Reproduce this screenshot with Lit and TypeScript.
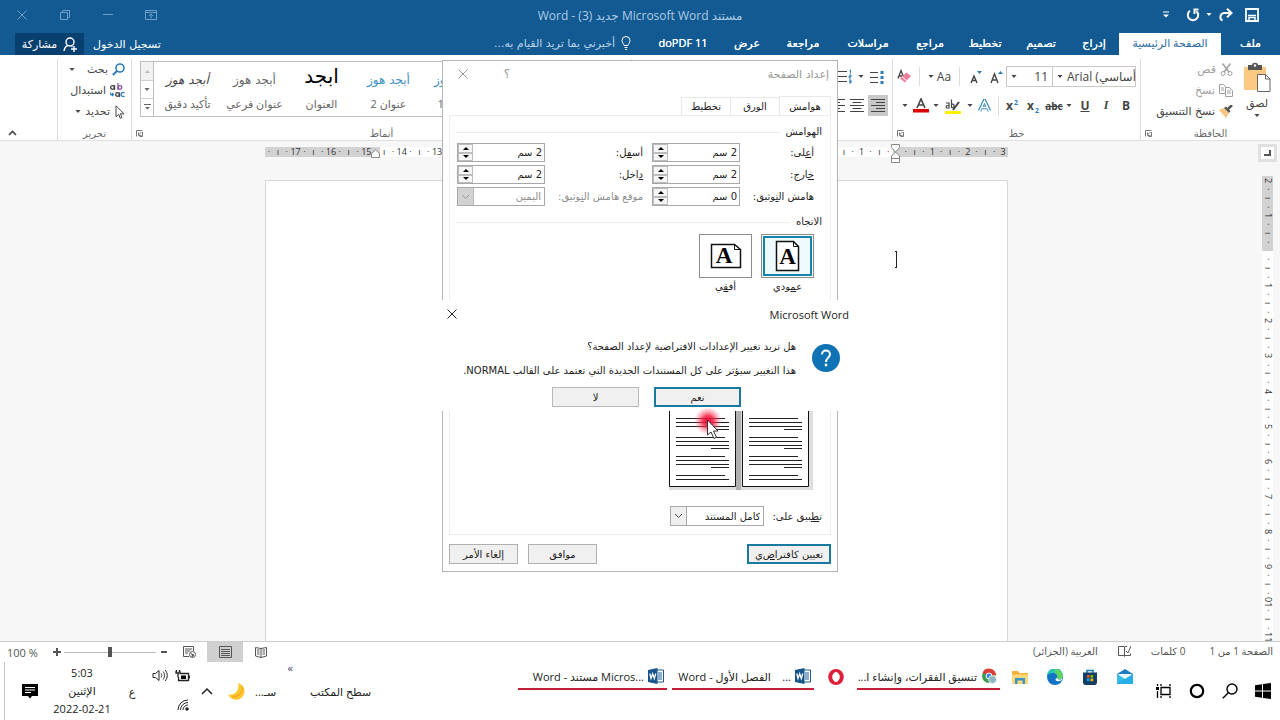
import { LitElement, html, svg, css, nothing } from "lit";
import { customElement, property } from "lit/decorators.js";
import { classMap } from "lit/directives/class-map.js";

const base = css`
  * { box-sizing: border-box; }
  button, input, select {
    font: inherit; color: inherit; margin: 0; padding: 0; border: 0;
    background: none; border-radius: 0; min-width: 0; outline: 0;
  }
  button { display: flex; align-items: center; justify-content: center; white-space: nowrap; }
  select { appearance: none; }
  svg { display: block; flex: none; }
  u { text-underline-offset: 1px; }
`;

const icon = (w: number, h: number, body: unknown) =>
  html`<svg width=${w} height=${h} viewBox="0 0 ${w} ${h}" fill="none" stroke="currentColor" aria-hidden="true">${body}</svg>`;

const caret = () => icon(6, 4, svg`<path d="M.5 0h5L3 3z" fill="currentColor" stroke="none"/>`);
const cross = (s: number) => icon(s, s, svg`<path d="M.5.5 ${s - 0.5} ${s - 0.5}M${s - 0.5}.5.5 ${s - 0.5}"/>`);
const launcher = () => icon(7, 7, svg`<path d="M6.500.500h-6v6M5.500 2 2.500 5M2.500 2.500v3h3M6.500 2v4.500H3.500"/>`);

const wordIcon = () => icon(16, 16, svg`
  <path d="M8 2h7.500v12H8z" fill="#fff" stroke="#1b5a92"/>
  <path d="M10 5h4M10 7h4M10 9h4M10 11h4" stroke="#1b5a92"/>
  <path d="M0 2 9.500 0v16L0 14z" fill="#16548c" stroke="none"/>
  <path d="M1.800 5.500 3 10.500 4.700 5.800 6.300 10.500 7.800 5.500" stroke="#fff" stroke-width="1.300"/>`);

/* ------------------------------------------------------------ title bar */
@customElement("title-bar")
export class TitleBar extends LitElement {
  static styles = [base, css`
    :host { display: grid; grid-template-columns: 1fr auto 1fr; height: 31px; background: #135a93; color: #fff; }
    .quick { display: flex; align-items: center; padding-inline-start: 18px; height: 29px; }
    .tool { width: 20px; height: 24px; }
    .thin { width: 12px; }
    .apart { margin-inline-start: 7px; }
    .title { color: #aecbe4; font-size: 12px; line-height: 32px; white-space: nowrap; }
    .system { display: flex; justify-content: flex-end; height: 29px; color: #6d9fca; }
    .system button { width: 43px; }
  `];
  render() {
    return html`
      <div class="quick">
        <button class="tool" aria-label="حفظ">${icon(14, 14, svg`<path d="M1 1h12v12H1z" stroke-width="1.800"/><path d="M3 7.500h8" stroke-width="1.500"/><path d="M4 13v-3.500h6V13" stroke-width="1.500"/>`)}</button>
        <button class="tool apart" aria-label="إعادة">${icon(15, 14, svg`<path d="M13 5H6a4 4 0 0 0-1.500 7.500" stroke-width="2"/><path d="M9 .800 13.500 5 9 9.200" stroke-width="2"/>`)}</button>
        <button class="tool thin" aria-label="خيارات الإعادة">${caret()}</button>
        <button class="tool" aria-label="تراجع">${icon(14, 14, svg`<path d="M4 2.800a5.200 5.200 0 1 0 6.500.400" stroke-width="2"/><path d="M12.500 1.500H8.500V6" stroke-width="2"/>`)}</button>
        <button class="tool apart" aria-label="تخصيص">${icon(6, 7, svg`<path d="M0 1h6" /><path d="M0 3.500h6L3 6.500z" fill="currentColor" stroke="none"/>`)}</button>
      </div>
      <div class="title">مستند Microsoft Word جديد (3) - Word</div>
      <div class="system">
        <button aria-label="عرض الشريط">${icon(12, 10, svg`<path d="M.5.5h11v9H.5zM.5 2.500h11M6 8.500V4M4 6l2-2 2 2"/>`)}</button>
        <button aria-label="تصغير">${icon(10, 2, svg`<path d="M0 .5h10"/>`)}</button>
        <button aria-label="استعادة">${icon(10, 10, svg`<path d="M.5 2.500h7v7h-7zM2.500 2.500v-2h7v7h-2"/>`)}</button>
        <button aria-label="إغلاق">${cross(10)}</button>
      </div>`;
  }
}

/* ------------------------------------------------------------ ribbon tabs */
@customElement("ribbon-tabs")
export class RibbonTabs extends LitElement {
  static styles = [base, css`
    :host { display: flex; height: 24px; background: #135a93; color: #fff; font-size: 11px; }
    .tabs { display: grid; grid-template-columns: 59px 102px 50px 56px 56px 54px 70px 60px 52px 76px; padding-top: 2px; }
    .tab { text-shadow: 0 0 0 #fff; padding-bottom: 3px; }
    .on { background: #fff; color: #2b6ca3; text-shadow: none; }
    .ask { color: #bcd5ea; gap: 6px; padding-inline-start: 14px; }
    .ask svg { color: #fff; }
    .account { display: flex; margin-inline-start: auto; padding-inline-end: 15px; padding-top: 2px; }
    .sign { padding-inline: 9px; }
    .share { background: #073f6f; width: 69px; gap: 6px; }
    .ask, .account { font-family: "DejaVu Sans", sans-serif; }
  `];
  render() {
    const names = ["ملف", "الصفحة الرئيسية", "إدراج", "تصميم", "تخطيط", "مراجع", "مراسلات", "مراجعة", "عرض", "doPDF 11"];
    return html`
      <div class="tabs" role="tablist">
        ${names.map((n, i) => html`<button role="tab" class=${classMap({ tab: true, on: i === 1 })}>${n}</button>`)}
      </div>
      <button class="ask">${icon(10, 14, svg`<path d="M3 9.500C3 8 1 7 1 4.500a4 4 0 0 1 8 0C9 7 7 8 7 9.500zM3.500 11.500h3M4 13.500h2"/>`)}أخبرني بما تريد القيام به...</button>
      <div class="account">
        <button class="sign">تسجيل الدخول</button>
        <button class="share">${icon(14, 15, svg`<circle cx="7" cy="5" r="4" stroke-width="1.400"/><path d="M1 14c.500-3 2-5 4-5.500M8.500 9.500h1M11 9v6M8 12h6" stroke-width="1.400"/>`)}مشاركة</button>
      </div>`;
  }
}

/* ------------------------------------------------------------ ribbon */
@customElement("ribbon-group")
export class RibbonGroup extends LitElement {
  @property() name = "";
  @property({ type: Boolean }) opener = false;
  static styles = [base, css`
    :host { display: flex; flex-direction: column; border-inline-end: 1px solid #dcdcdc; margin-top: 4px; min-height: 0; }
    .body { flex: 1; min-height: 0; }
    .foot { display: grid; grid-template-columns: 14px 1fr 14px; align-items: center; height: 14px; color: #6a6a6a; font-size: 10px; flex: none; }
    .label { text-align: center; }
    button { grid-column: 3; color: #777; }
  `];
  render() {
    return html`<div class="body"><slot></slot></div>
      <div class="foot"><span></span><span class="label">${this.name}</span>
      ${this.opener ? html`<button aria-label="المزيد">${launcher()}</button>` : nothing}</div>`;
  }
}

const alignLines = (w: number[], start: number) =>
  icon(14, 13, svg`${w.map((n, i) => svg`<path d="M${start === 0 ? 0 : start === 1 ? (14 - n) / 2 : 14 - n} ${i * 3 + 0.5}h${n}"/>`)}`);

@customElement("word-ribbon")
export class WordRibbon extends LitElement {
  static styles = [base, css`
    :host { display: flex; height: 86px; background: #fff; color: #444; font-size: 11px; border-bottom: 1px solid #e0e0e0; overflow: hidden; }
    .clipboard { width: 140px; }
    .font { width: 248px; }
    .paragraph { width: 261px; }
    .styles { flex: 1; }
    .editing { width: 74px; }
    .clip { display: flex; padding-right: 9px; gap: 10px; }
    .paste { flex-direction: column; gap: 4px; width: 28px; padding-top: 3px; justify-content: flex-start; line-height: 14px; }
    .list { display: flex; flex-direction: column; flex: 1; font-family: "DejaVu Sans", sans-serif; }
    .list button { justify-content: flex-start; height: 21px; gap: 4px; }
    .list .off { color: #a0a0a0; }
    .list .push { margin-inline-start: 8px; }
    .row { display: flex; align-items: center; height: 21px; }
    .rows { display: flex; flex-direction: column; gap: 8px; padding: 7px 4px 0 0; }
    .box { display: flex; border: 1px solid #c8c8c8; height: 21px; align-items: center; font-size: 12px; }
    .box + .box { border-inline-start: 0; }
    .name { width: 84px; }
    .size { width: 46px; }
    .box input { flex: 1; width: 10px; direction: ltr; height: 19px; }
    .box .dd { width: 14px; }
    .size input { text-align: right; padding-right: 4px; }
    .b { height: 21px; font-size: 12px; direction: ltr; }
    .w8 { width: 8px; } .w10 { width: 10px; } .w16 { width: 16px; } .w20 { width: 20px; } .w22 { width: 22px; } .w26 { width: 26px; }
    .bold { font-weight: 700; }
    .ital { font-style: italic; font-family: "Liberation Serif", serif; font-weight: 700; }
    .und { text-decoration: underline; font-weight: 700; }
    .strike { text-decoration: line-through; font-size: 10px; font-weight: 700; }
    .sep { width: 14px; height: 19px; background: linear-gradient(#dcdcdc, #dcdcdc) center / 1px 100% no-repeat; }
    .sep8 { width: 8px; }
    sub, sup { font-size: 7px; color: #2b7cb8; line-height: 0; margin-left: 1px; }
    .active { background: #c8c8c8; }
    .gallery { display: flex; justify-content: flex-end; border: 1px solid #c0c0c0; height: 56px; margin: 2px 8px 0; }
    .style { width: 67px; flex-direction: column; justify-content: flex-start; overflow: hidden; color: #666; flex: none; }
    .sample { height: 32px; line-height: 36px; font-size: 12px; font-family: "DejaVu Sans", sans-serif; }
    .blue { color: #3a8fc4; }
    .big { color: #000; font-size: 20px; line-height: 28px; }
    .slant { font-style: italic; color: #444; }
    .caption { line-height: 20px; }
    .scroll { display: grid; grid-template-rows: 1fr 1fr 1fr; width: 13px; border-inline-start: 1px solid #c0c0c0; color: #666; }
    .scroll button + button { border-top: 1px solid #d0d0d0; }
    .scroll .off { background: #f2f2f2; color: #bbb; }
    .edit { padding-right: 6px; }
    .fold { width: 57px; flex: none; align-items: flex-end; justify-content: flex-end; padding: 0 0 4px 8px; }
  `];
  render() {
    const dd = (cls: string) => html`<button class="b ${cls}" aria-label="خيارات">${caret()}</button>`;
    return html`
      <ribbon-group class="clipboard" name="الحافظة" opener>
        <div class="clip">
          <button class="paste">
            ${icon(28, 30, svg`<path d="M1 5h22v23H1z" fill="#fcc983" stroke="none"/><path d="M5 3h4c0-3 6-3 6 0h4v5H5z" fill="#555" stroke="none"/><circle cx="12" cy="3.500" r="1.200" fill="#fff" stroke="none"/><path d="M14.500 12.500h8l4.500 4.500v12.500H14.500z" fill="#fff" stroke="#666"/><path d="M22.500 12.500V17H27" stroke="#666"/>`)}
            لصق ${caret()}
          </button>
          <div class="list">
            <button class="off">${icon(13, 13, svg`<path d="M2.500.500 9 9M10.500.500 4 9" stroke-width="1.500"/><circle cx="3" cy="10.500" r="2"/><circle cx="10" cy="10.500" r="2"/>`)}قص</button>
            <button class="off">${icon(14, 13, svg`<path d="M.5.500h4l2 2v7h-6z"/><path d="M6.500 3.500h4l3 3v6h-7zM8 7h4M8 9h4M2 4h3M2 6h3"/>`)}نسخ</button>
            <button>${icon(14, 13, svg`<path d="M0 5 5 3l5 5-3 5z" fill="#fac582" stroke="none"/><path d="M5 3 7 1.500 11.500 6 10 8z" fill="#555" stroke="none"/><path d="M9 4 13 0" stroke="#555" stroke-width="2.500"/>`)}نسخ التنسيق</button>
          </div>
        </div>
      </ribbon-group>

      <ribbon-group class="font" name="خط" opener>
        <div class="rows">
          <div class="row">
            <div class="box name"><input aria-label="الخط" value="Arial (أساسي"><button class="dd" aria-label="الخطوط">${caret()}</button></div>
            <div class="box size"><input aria-label="حجم الخط" value="11"><button class="dd" aria-label="الأحجام">${caret()}</button></div>
            <button class="b w20" aria-label="تكبير">${icon(13, 14, svg`<path d="M1 13 4.500 4 8 13M2 10h5" stroke-width="1.400"/><path d="M8 4h5L10.500 1z" fill="#2b7cb8" stroke="none"/>`)}</button>
            <button class="b w20" aria-label="تصغير">${icon(12, 14, svg`<path d="M1 13 4 6 7 13M2 10.500h4" stroke-width="1.400"/><path d="M7 1h5L9.500 4z" fill="#2b7cb8" stroke="none"/>`)}</button>
            <span class="sep"></span>
            <button class="b w16">Aa</button>${dd("w10")}
            <span class="sep"></span>
            <button class="b w16" aria-label="مسح التنسيق">${icon(15, 15, svg`<path d="M1 9.500 4 1.500 6.500 8M2 7h3" stroke-width="1.300"/><path d="M9.500 3.500 14 7l-6 6.500L3 9.500z" fill="#ee7f9b" stroke="none"/><path d="M5 7.800 10 11.800" stroke="#fff"/>`)}</button>
          </div>
          <div class="row">
            <button class="b w20 bold">B</button><button class="b w20 ital">I</button><button class="b w22 und">U</button>${dd("w10")}
            <button class="b w20 strike">abc</button>
            <button class="b w22 bold"><span>x<sub>2</sub></span></button><button class="b w20 bold"><span>x<sup>2</sup></span></button>
            <span class="sep sep8"></span>
            <button class="b w20" aria-label="تأثيرات النص">${icon(13, 13, svg`<path d="M1.500 12 6.500 1.500 11.500 12M3.500 8.500h6" stroke="#3e8cc0" stroke-width="3.600"/><path d="M1.500 12.500 6.500 2 11.500 12.500M3.500 8.500h6" stroke="#fff" stroke-width="1.500"/>`)}</button>${dd("w8")}
            <button class="b w26" aria-label="تمييز">${icon(16, 16, svg`<path d="M0 13h16v3H0z" fill="#fff100" stroke="none"/><path d="M1 5h3v5H2a1.400 1.400 0 0 1 0-2.500h2M6.500 1.500v8c3 1 4-4 0-3.500" stroke-width="1.200"/><path d="M8 12l6-8" stroke-width="2"/>`)}</button>${dd("w8")}
            <button class="b w22" aria-label="لون الخط">${icon(16, 15, svg`<path d="M0 11h16v3.500H0z" fill="#d80000" stroke="none"/><path d="M4 10 8 1 12 10M5.500 7h5" stroke-width="1.600"/>`)}</button>${dd("w10")}
          </div>
        </div>
      </ribbon-group>

      <ribbon-group class="paragraph">
        <div class="rows">
          <div class="row">
            <button class="b w22" aria-label="تعداد نقطي">${icon(14, 14, svg`<path d="M0 2.500h8M0 7.500h8M0 12.500h8"/><path d="M10.500 1h3v3h-3zM10.500 6h3v3h-3zM10.500 11h3v3h-3z" fill="#2b7cb8" stroke="none"/>`)}</button>${dd("w10")}
            <button class="b w22" aria-label="تعداد رقمي">${icon(15, 15, svg`<path d="M0 2.500h9M0 7.500h9M0 12.500h9"/><path d="M11.500 1h1v3.500M11 6h2v1.500h-2V9h2M11 11h2v3h-2M11 12.500h2" stroke="#2b7cb8"/>`)}</button>
          </div>
          <div class="row">
            <button class="b w20 active" aria-label="محاذاة لليمين">${alignLines([14, 9, 14, 9, 14], 2)}</button>
            <button class="b w22" aria-label="توسيط">${alignLines([14, 9, 14, 9, 14], 1)}</button>
            <button class="b w16" aria-label="محاذاة لليسار">${alignLines([14, 9, 14, 9, 14], 0)}</button>
          </div>
        </div>
      </ribbon-group>

      <ribbon-group class="styles" name="أنماط" opener>
        <div class="gallery">
          <button class="style"><span class="sample blue">أبجد هوز</span><span class="caption">عنوان 1</span></button>
          <button class="style"><span class="sample blue">أبجد هوز</span><span class="caption">عنوان 2</span></button>
          <button class="style"><span class="sample big">ابجد</span><span class="caption">العنوان</span></button>
          <button class="style"><span class="sample">أبجد هوز</span><span class="caption">عنوان فرعي</span></button>
          <button class="style"><span class="sample slant">أبجد هوز</span><span class="caption">تأكيد دقيق</span></button>
          <div class="scroll">
            <button class="off" aria-label="أعلى">${icon(5, 3, svg`<path d="M0 3h5L2.500 0z" fill="currentColor" stroke="none"/>`)}</button>
            <button aria-label="أسفل">${caret()}</button>
            <button aria-label="المزيد">${icon(7, 7, svg`<path d="M0 .500h7"/><path d="M1 3h5L3.500 5.500z" fill="currentColor" stroke="none"/>`)}</button>
          </div>
        </div>
      </ribbon-group>

      <ribbon-group class="editing" name="تحرير">
        <div class="list edit">
          <button>${icon(13, 13, svg`<circle cx="8" cy="5" r="4" stroke="#2b7cb8" stroke-width="1.600"/><path d="M5 8 .800 12" stroke="#2b7cb8" stroke-width="2"/>`)}بحث<span class="push">${caret()}</span></button>
          <button>${icon(15, 15, svg`<g stroke-width="1.300"><circle cx="2.500" cy="4.500" r="1.800"/><path d="M4.500 2v5" /><path d="M8 0v7" stroke="#8a4ea8"/><circle cx="10" cy="4.500" r="1.800" stroke="#8a4ea8"/><path d="M0 9v2.500h3M2 10l1.500 1.500L2 13" stroke="#2b7cb8"/><circle cx="7.500" cy="11.500" r="1.800"/><path d="M9.500 9.500v4.500"/><path d="M14.500 10a2 2 0 1 0 0 3" stroke="#2b7cb8"/></g>`)}استبدال</button>
          <button>${icon(11, 14, svg`<path d="M2 .800v11l2.700-2.500 1.500 4 1.800-.800-1.600-3.700H10z"/>`)}تحديد<span>${caret()}</span></button>
        </div>
      </ribbon-group>
      <button class="fold" aria-label="طي الشريط">${icon(9, 6, svg`<path d="M1 5 4.500 1.500 8 5" stroke-width="1.600"/>`)}</button>`;
  }
}

/* ------------------------------------------------------------ workspace */
const TICKS = ["n", "·", "ı", "·"];
const ticks = (count: number, zero: number, reversed = false) =>
  Array.from({ length: count }, (_, i) => {
    if (i % 4) return TICKS[i % 4];
    const n = String(Math.abs(i - zero) / 4);
    return n === "0" ? "" : reversed ? [...n].reverse().join("") : n;
  });

@customElement("word-workspace")
export class WordWorkspace extends LitElement {
  static styles = [base, css`
    :host { display: grid; grid-template-columns: 25px 1fr 17px; background: #f7f7f7; overflow: hidden; min-height: 0; color: #333; font-size: 9px; }
    .side { display: flex; flex-direction: column; align-items: center; padding-top: 3px; min-height: 0; }
    .corner { width: 19px; height: 18px; border: 3px solid #e0e0e0; background: #fff; color: #555; margin-bottom: 14px; flex: none; }
    .vruler { flex: 1; min-height: 0; width: 11px; display: flex; writing-mode: vertical-rl; direction: ltr; background: #fff; overflow: hidden; }
    .cell { flex: 1 1 0; min-width: 0; min-height: 0; display: flex; align-items: center; justify-content: center; line-height: 10px; white-space: nowrap; }
    .margin { background: #d2d2d2; }
    .half { background: linear-gradient(#d2d2d2 50%, #fff 50%); }
    .area { display: grid; grid-template-columns: 743px; grid-template-rows: 39px 1fr; justify-content: center; min-height: 0; }
    .hruler { position: relative; display: flex; height: 10px; margin-top: 6px; background: #fff; }
    .mark { position: absolute; top: -3px; inset-inline-start: 107px; color: #888; }
    .end { top: 2px; inset-inline-start: 628px; }
    .page { background: #fff; border: 1px solid #d8d8d8; border-bottom: 0; padding: 70px 109px 0 0; }
    .beam { width: 3px; height: 17px; color: #222; }
  `];
  render() {
    return html`
      <div class="side">
        <button class="corner" aria-label="علامة جدولة">${icon(7, 6, svg`<path d="M6 0v5H0" stroke-width="2"/>`)}</button>
        <div class="vruler">${ticks(53, 8, true).map((t, i) => html`<span class=${classMap({ cell: true, margin: i < 8, half: i === 8 })}>${t}</span>`)}</div>
      </div>
      <div class="area">
        <div class="hruler">
          ${ticks(84, 12).map((t, i) => html`<span class=${classMap({ cell: true, margin: i < 13 || i > 70 })}>${t}</span>`)}
          <span class="mark">${icon(11, 20, svg`<path d="M1.500.500h8v3L5.500 8l4 4v2.500h-8V12l4-4-4-4.500zM1.500 14.500h8v4h-8z" fill="#fff"/>`)}</span>
          <span class="mark end">${icon(9, 10, svg`<path d="M.5 4.500 4.500.800l4 3.700v4h-8z" fill="#fff"/>`)}</span>
        </div>
        <div class="page"><div class="beam">${icon(3, 17, svg`<path d="M0 .500h2M1.500 0v16M0 16.500h2"/>`)}</div></div>
      </div>
      <span></span>`;
  }
}

/* ------------------------------------------------------------ status bar */
@customElement("status-bar")
export class StatusBar extends LitElement {
  static styles = [base, css`
    :host { display: flex; align-items: center; height: 21px; border-top: 1px solid #cbcfcb; background: #fff; color: #555; font-size: 10px; padding: 0 7px; }
    .info { display: flex; align-items: center; gap: 24px; line-height: 18px; padding-bottom: 2px; }
    .proof { margin-inline: -4px; }
    .views { display: flex; align-items: center; height: 20px; margin-inline-start: auto; }
    .view { width: 36px; height: 20px; }
    .on { background: #d0d0d0; }
    .zoom { width: 15px; height: 20px; }
    .level { direction: ltr; font-size: 11px; width: 42px; text-align: left; }
    .slider { appearance: none; width: 92px; height: 20px; direction: ltr; background: linear-gradient(#bbb, #bbb) center / 100% 1px no-repeat; }
    .slider::-webkit-slider-thumb { appearance: none; width: 4px; height: 10px; background: #555; }
  `];
  render() {
    return html`
      <div class="info"><span>الصفحة 1 من 1</span><span>0 كلمات</span>
        <button class="proof" aria-label="تدقيق">${icon(13, 12, svg`<path d="M6 1.500H.500v9H6l.500 1 .500-1h5.500v-2M6.500 2v9M6.500 1.500H9M8 6l2 2 3-7" />`)}</button>
        <span>العربية (الجزائر)</span></div>
      <div class="views">
        <button class="view" aria-label="قراءة">${icon(12, 12, svg`<path d="M.500 1.500 6 2.500l5.500-1v8.500L6 11.500.500 10zM6 2v9.500M2 4h2.500M2 6h2.500M2 8h2.500M7.500 4H10M7.500 6H10M7.500 8H10"/>`)}</button>
        <button class="view on" aria-label="تخطيط الطباعة">${icon(13, 12, svg`<path d="M.500.500h12v11H.500zM2 3.500h9M2 5.500h9M2 7.500h9M2 9.500h9"/>`)}</button>
        <button class="view" aria-label="تخطيط ويب">${icon(13, 12, svg`<path d="M6 10.500H.500V.500h10V5M2 3h7M2 5h5M2 7h3"/><circle cx="9.500" cy="8.500" r="3"/><path d="M8 7.500l3 2M9 11l1-3" stroke-width="1.300"/>`)}</button>
        <button class="zoom" aria-label="تصغير">${icon(6, 2, svg`<path d="M0 1h6" stroke-width="2"/>`)}</button>
        <input class="slider" type="range" min="0" max="100" value="50" aria-label="تكبير/تصغير">
        <button class="zoom" aria-label="تكبير">${icon(8, 8, svg`<path d="M0 4h8M4 0v8" stroke-width="2"/>`)}</button>
        <span class="level">100 %</span>
      </div>`;
  }
}

/* ------------------------------------------------------------ taskbar */
@customElement("task-bar")
export class TaskBar extends LitElement {
  static styles = [base, css`
    :host { display: flex; height: 58px; background: #fff; color: #222; font-size: 11px; }
    .start { display: flex; color: #000; padding-inline-start: 1px; }
    .start button { width: 33px; }
    .band { display: flex; height: 29px; margin-inline-start: 5px; }
    .pin { width: 35px; }
    .task { display: flex; align-items: center; justify-content: flex-start; gap: 4px; border-bottom: 2px solid #c3203a; height: 28px; padding: 2px 3px 0; }
    .chrome { width: 143px; margin-inline-start: 2px; }
    .wordb { width: 142px; margin-inline-start: 4px; }
    .wordm { width: 149px; margin-inline-start: 5px; }
    .cap { direction: ltr; white-space: pre; }
    .opera { margin-inline-start: 4px; }
    .desk { display: flex; align-items: center; margin-inline-start: auto; }
    .more { align-self: flex-start; width: 10px; margin-inline: 9px 15px; color: #446; line-height: 12px; direction: ltr; text-align: center; }
    .weather { gap: 10px; padding-inline-end: 8px; }
    .up { width: 26px; }
    .tray { display: grid; grid-template-columns: 23px 23px; grid-template-rows: 29px 29px; }
    .tray button { height: 27px; }
    .lang { width: 32px; }
    .clock { display: grid; grid-template-rows: 18px 18px 18px; width: 68px; text-align: center; line-height: 18px; }
    .note { width: 36px; }
    .edgeline { border-inline-end: 1px solid #c8c8c8; width: 8px; margin-inline-end: 4px; }
  `];
  render() {
    return html`
      <div class="start">
        <button aria-label="ابدأ">${icon(16, 16, svg`<g fill="#000" stroke="none"><path d="M0 2.300 7 1.300v6.200H0zM8 1.100 16 0v7.500H8zM0 8.500h7v6.200l-7-1zM8 8.500h8V16l-8-1.100z"/></g>`)}</button>
        <button aria-label="بحث">${icon(16, 16, svg`<circle cx="10" cy="6" r="5" stroke-width="1.400"/><path d="M6.300 9.700.800 15.200" stroke-width="1.400"/>`)}</button>
        <button aria-label="كورتانا">${icon(16, 16, svg`<circle cx="8" cy="8" r="6.200" stroke-width="2.200"/>`)}</button>
        <button aria-label="عرض المهام">${icon(16, 16, svg`<path d="M5 4.500h9v7H5z" stroke-width="1.300"/><path d="M5 1v2M14 1v2M5 13v2M14 13v2M1.500 1v2M1.500 8v7" stroke-width="1.300"/><path d="M0 4h3v3H0z" fill="#000" stroke="none"/>`)}</button>
      </div>
      <div class="band">
        <button class="pin" aria-label="البريد">${icon(16, 15, svg`<path d="M0 5 8 0l8 5v10H0z" fill="#1d7cc1" stroke="none"/><path d="M1.500 5h13v5h-13z" fill="#eaf7fd" stroke="none"/><path d="M0 5l8 5-8 5z" fill="#35bdea" stroke="none"/><path d="M16 5v10H0z" fill="#24b0e6" stroke="none"/>`)}</button>
        <button class="pin" aria-label="المتجر">${icon(16, 16, svg`<path d="M5 4V1.500h6V4" stroke="#1677b8" stroke-width="1.500"/><path d="M1 3.500h14V14l-1.500 2h-11L1 14z" fill="#123f63" stroke="none"/><path d="M5 6h2.700v2.700H5z" fill="#f25022" stroke="none"/><path d="M8.500 6h2.700v2.700H8.500z" fill="#7fba00" stroke="none"/><path d="M5 9.500h2.700v2.700H5z" fill="#00a4ef" stroke="none"/><path d="M8.500 9.500h2.700v2.700H8.500z" fill="#ffb900" stroke="none"/>`)}</button>
        <button class="pin" aria-label="إيدج">${icon(16, 16, svg`<circle cx="8" cy="8" r="8" fill="#1173c6" stroke="none"/><path d="M0 7a8 8 0 0 1 16 0c0 4-5 4-6 2 1-3-1-5-4-5C3 4 1 5 0 7z" fill="#2bc3b4" stroke="none"/><path d="M8 .100A8 8 0 0 1 16 7c0 4-5 4-6 2 1-2 0-4-2-4.800z" fill="#63d35f" stroke="none"/><path d="M10 9c1 2 4 2 5.500.500C15 12 12 12.500 10 12 8 11.500 8 9.500 10 9z" fill="#fff" stroke="none"/>`)}</button>
        <button class="pin" aria-label="المستكشف">${icon(16, 14, svg`<path d="M0 1h6l1.500 2H16v11H0z" fill="#f2b23c" stroke="none"/><path d="M0 4.500h16V14H0z" fill="#fbd87b" stroke="none"/><path d="M3 14V8h10v6h-2.500v-3.500h-5V14z" fill="#3f94c4" stroke="none"/>`)}</button>
        <button class="task chrome">${icon(16, 16, svg`<circle cx="8" cy="8" r="7" fill="#3a9c51" stroke="none"/><path d="M1.500 5A7 7 0 0 1 15 7.500H8z" fill="#dc3d35" stroke="none"/><path d="M15 7a7 7 0 0 1-6 8l-1-6z" fill="#f6c52d" stroke="none"/><circle cx="8" cy="8" r="3" fill="#4285f4" stroke="#fff"/><circle cx="11.500" cy="11.500" r="4" fill="#8fb5c4" stroke="#fff" stroke-width=".7"/>`)}<span>تنسيق الفقرات، وإنشاء ا...</span></button>
        <button class="pin opera" aria-label="أوبرا">${icon(16, 16, svg`<ellipse cx="8" cy="8" rx="5.800" ry="6" stroke="#e0203a" stroke-width="4"/><ellipse cx="8" cy="8" rx="2.800" ry="5" fill="#fff" stroke="none"/>`)}</button>
        <button class="task wordb">${wordIcon()}<span class="cap">Word - الفصل الأول    ...</span></button>
        <button class="task wordm">${wordIcon()}<span class="cap">Word - مستند Micros...</span></button>
      </div>
      <div class="desk">
        <span>سطح المكتب</span>
        <button class="more" aria-label="المزيد">«</button>
        <button class="weather">سـ...${icon(17, 17, svg`<path d="M10 0a8.500 8.500 0 1 1-9.800 11.500C6 13 12 8 10 0z" fill="#fcc934" stroke="none"/><path d="M14 3c2 6-3 11-10 11" stroke="#f6a51c" stroke-width="1.200"/>`)}</button>
        <button class="up" aria-label="إظهار الرموز">${icon(12, 8, svg`<path d="M1 7 6 2l5 5" stroke-width="1.500"/>`)}</button>
        <div class="tray">
          <button aria-label="البطارية">${icon(15, 12, svg`<path d="M5 3.500h8.500v7H3.500V7M14.500 5.500v3M1 1v2h4V1M3 3v4M1.500 0v2M4.500 0v2" stroke-width="1.300"/><path d="M6 5.500h5v3.500H6z" fill="#000" stroke="none"/>`)}</button>
          <button aria-label="الصوت">${icon(16, 13, svg`<path d="M1 4.500h2.500l3.500-3v10l-3.500-3H1zM9 4.500c1 1 1 3 0 4M11 2.500c2 2 2 6 0 8M13 1c3 3 3 8 0 11"/>`)}</button>
          <button aria-label="الشبكة">${icon(12, 12, svg`<circle cx="10" cy="10" r="1.800" fill="#222" stroke="none"/><path d="M6 11a5 5 0 0 1 5-5M3.500 11A7.500 7.500 0 0 1 11 3.500M1 11A10 10 0 0 1 11 1"/>`)}</button>
        </div>
        <button class="lang">ع</button>
        <div class="clock"><span>5:03</span><span>الإثنين</span><span>2022-02-21</span></div>
        <button class="note" aria-label="الإشعارات">${icon(16, 15, svg`<path d="M0 0h16v12h-6l-2 2.500L6 12H0z" fill="#000" stroke="none"/><path d="M3 3.500h10M3 6h10M3 8.500h6" stroke="#fff"/>`)}</button>
      </div>
      <span class="edgeline"></span>`;
  }
}

/* ------------------------------------------------------------ page setup dialog */
const spinArrow = (up: boolean) =>
  icon(6, 3, up ? svg`<path d="M0 3h6L3 0z" fill="#000" stroke="none"/>` : svg`<path d="M0 0h6L3 3z" fill="#000" stroke="none"/>`);

@customElement("page-setup")
export class PageSetup extends LitElement {
  static styles = [base, css`
    :host { display: flex; flex-direction: column; border: 1px solid #b4b4b4; background: #fff; color: #222; font-size: 10px; padding: 0 6px 7px; font-family: "DejaVu Sans", sans-serif; }
    .head { display: flex; align-items: center; height: 26px; color: #999; padding: 0 2px 0 9px; font-size: 11px; }
    .head .q { margin-inline-start: auto; width: 16px; margin-inline-end: 31px; font-size: 12px; }
    .tabs { display: flex; align-items: flex-end; margin-top: 9px; }
    .tab { width: 49px; height: 18px; border: 1px solid #e8e8e8; border-bottom: 0; border-inline-start: 0; }
    .tab.on { width: 52px; height: 19px; border-inline-start: 1px solid #e8e8e8; }
    .panel { border: 1px solid #ececec; padding: 8px 8px 8px 6px; display: flex; flex-direction: column; height: 420px; }
    .legend { display: flex; align-items: center; gap: 6px; line-height: 16px; }
    .legend::after { content: ""; flex: 1; border-top: 1px solid #ececec; }
    .fields { display: grid; grid-template-columns: 74px 88px 107px 88px; row-gap: 3px; align-items: center; padding-inline-start: 8px; margin: 3px 0 8px; }
    label { white-space: nowrap; }
    .second { padding-inline-start: 9px; }
    .spin, .pick { display: flex; height: 19px; border: 1px solid #a8a8a8; align-items: stretch; background: #fff; }
    .spin input { flex: 1; width: 20px; padding-right: 2px; }
    .arrows { display: grid; grid-template-rows: 1fr 1fr; width: 15px; }
    .arrows button { border: 1px solid #bdbdbd; background: #f6f6f6; }
    .pick { position: relative; }
    .pick select { flex: 1; padding: 0 3px; text-align: right; opacity: 1; }
    .arrow { position: absolute; left: 0; top: 0; bottom: 0; width: 16px; display: flex; align-items: center; justify-content: center; background: #efefef; border-right: 1px solid #a8a8a8; pointer-events: none; color: #444; }
    .dim { color: #8c8c8c; }
    .dim .arrow { background: #d2d2d2; border-color: #bbb; color: #999; }
    .tiles { display: flex; gap: 9px; padding-inline-start: 8px; margin-top: 4px; }
    .tile { flex-direction: column; gap: 3px; width: 53px; }
    .frame { display: flex; align-items: center; justify-content: center; width: 53px; height: 44px; border: 1px solid #8c8c8c; }
    .sel .inner { display: flex; align-items: center; justify-content: center; width: 49px; height: 40px; border: 2px solid #1583b0; background: #effaff; }
    .preview { margin-top: auto; padding-inline-start: 9px; }
    .apply { display: flex; align-items: center; gap: 8px; margin-top: 16px; }
    .apply .pick { width: 94px; height: 20px; }
    .foot { display: flex; gap: 10px; margin-top: 9px; }
    .btn { width: 69px; height: 20px; border: 1px solid #b0b0b0; background: #f0f0f0; }
    .main { width: 84px; border: 2px solid #187a9f; margin-inline-end: auto; }
  `];
  private spin(id: string, label: unknown, value: string, second = false) {
    return html`<label for=${id} class=${classMap({ second })}>${label}</label>
      <div class="spin"><input id=${id} value=${value}><div class="arrows">
        <button aria-label="زيادة">${spinArrow(true)}</button><button aria-label="إنقاص">${spinArrow(false)}</button></div></div>`;
  }
  private sheet(x: number) {
    const rows = [4, 8, 12, 15, 23, 27, 31, 34, 42, 46, 50, 53, 61, 65];
    return svg`<path d="M${x + 0.5}-4v80.500h66v-80.500" fill="#fff" stroke="#111"/>
      ${rows.map((y, i) => {
        const k = i % 4;
        const a = k === 3 ? 42 : 7;
        const b = k === 0 ? 56 : 60;
        return svg`<path d="M${x + a} ${y + 4.5}H${x + b}" stroke="#222"/>`;
      })}`;
  }
  render() {
    const chevron = icon(9, 6, svg`<path d="M1 1l3.500 3.500L8 1"/>`);
    const letter = (x: number, y: number) =>
      svg`<text x=${x} y=${y} font-family="Liberation Serif, serif" font-weight="700" font-size="23" text-anchor="middle" fill="#000" stroke="none">A</text>`;
    return html`
      <div class="head"><span>إعداد الصفحة</span><button class="q">؟</button><button aria-label="إغلاق">${cross(10)}</button></div>
      <div class="tabs" role="tablist"><button role="tab" class="tab on">هوامش</button><button role="tab" class="tab">الورق</button><button role="tab" class="tab">تخطيط</button></div>
      <div class="panel">
        <div class="legend">الهوامش</div>
        <div class="fields">
          ${this.spin("top", html`أ<u>ع</u>لى:`, "2 سم")}${this.spin("bottom", html`أس<u>ف</u>ل:`, "2 سم", true)}
          ${this.spin("outer", html`<u>خ</u>ارج:`, "2 سم")}${this.spin("inner", html`<u>د</u>اخل:`, "2 سم", true)}
          ${this.spin("gutter", html`هامش ال<u>ت</u>وثيق:`, "0 سم")}
          <label for="place" class="second dim">موقع هامش ال<u>ت</u>وثيق:</label>
          <div class="pick dim"><select id="place" disabled><option>اليمين</option></select><span class="arrow">${chevron}</span></div>
        </div>
        <div class="legend">الاتجاه</div>
        <div class="tiles">
          <button class="tile sel"><span class="frame"><span class="inner">${icon(26, 32, svg`<path d="M1.500 1.500h17l5 5v24h-22z" fill="#fff" stroke="#111" stroke-width="1.500"/><path d="M18.500 1.500v5h5" stroke="#111"/>${letter(12.5, 24)}`)}</span></span><span>ع<u>م</u>ودي</span></button>
          <button class="tile"><span class="frame">${icon(32, 26, svg`<path d="M1.500 1.500h23l6 5v18h-29z" fill="#fff" stroke="#111" stroke-width="1.500"/><path d="M24.500 1.500v5h6" stroke="#111"/>${letter(14, 20)}`)}</span><span>أف<u>ق</u>ي</span></button>
        </div>
        <div class="preview">${icon(146, 80, svg`<path d="M2 0h144v80H2z" fill="#dedede" stroke="none"/><path d="M69 0h5v80h-5z" fill="#b0b0b0" stroke="none"/>${this.sheet(2)}${this.sheet(75)}`)}</div>
        <div class="apply"><label for="scope">ت<u>ط</u>بيق على:</label>
          <div class="pick"><select id="scope"><option>كامل المستند</option></select><span class="arrow">${chevron}</span></div></div>
      </div>
      <div class="foot"><button class="btn main">تعيين كافترا<u>ض</u>ي</button><button class="btn">موافق</button><button class="btn">إلغاء الأمر</button></div>`;
  }
}

/* ------------------------------------------------------------ message box */
@customElement("message-box")
export class MessageBox extends LitElement {
  static styles = [base, css`
    :host { display: flex; flex-direction: column; background: #fff; color: #222; font-size: 10px; padding: 4px 9px 4px 4px; }
    .head { display: flex; justify-content: space-between; align-items: center; height: 20px; font-size: 11px; }
    .head button { width: 11px; height: 20px; }
    .close { color: #222; }
    .body { display: flex; gap: 16px; padding-top: 11px; font-family: "DejaVu Sans", sans-serif; }
    .body svg { margin: 9px 9px 0 0; }
    p { margin: 0; line-height: 24px; white-space: nowrap; }
    .actions { display: flex; justify-content: center; gap: 15px; margin-top: 4px; padding-inline-start: 2px; }
    .btn { width: 87px; height: 20px; border: 1px solid #b8b8b8; background: #f0f0f0; }
    .main { border: 2px solid #187a9f; }
  `];
  render() {
    return html`
      <div class="head"><span>Microsoft Word</span><button class="close" aria-label="إغلاق">${cross(10)}</button></div>
      <div class="body">
        ${icon(28, 28, svg`<circle cx="14" cy="14" r="14" fill="#0e72b4" stroke="none"/><path d="M10 10.500c0-5.500 8-5.500 8 0 0 3-4 3.500-4 7.500" stroke="#fff" stroke-width="2"/><circle cx="14" cy="21" r="1.400" fill="#fff" stroke="none"/>`)}
        <div><p>هل تريد تغيير الإعدادات الافتراضية لإعداد الصفحة؟</p><p>هذا التغيير سيؤثر على كل المستندات الجديدة التي تعتمد على القالب NORMAL.</p></div>
      </div>
      <div class="actions"><button class="btn main">نعم</button><button class="btn">لا</button></div>`;
  }
}

@customElement("app-root")
export class AppRoot extends LitElement {
  static styles = [base, css`
    :host {
      display: grid; grid-template-rows: auto auto auto 1fr auto auto; height: 100vh; position: relative;
      direction: rtl; overflow: hidden; background: #fff; font-family: "Open Sans", "DejaVu Sans", sans-serif;
    }
    .setup { position: absolute; top: 60px; left: 50%; width: 396px; margin-left: -198px; }
    .message { position: absolute; top: 300px; left: 50%; width: 416px; height: 111px; margin-left: -198px; }
    .pointer { position: absolute; top: 405px; left: 50%; margin-left: 52px; }
  `];
  render() {
    return html`
      <title-bar></title-bar>
      <ribbon-tabs></ribbon-tabs>
      <word-ribbon></word-ribbon>
      <word-workspace></word-workspace>
      <status-bar></status-bar>
      <task-bar></task-bar>
      <page-setup class="setup" role="dialog"></page-setup>
      <message-box class="message" role="alertdialog"></message-box>
      <div class="pointer">${icon(34, 36, svg`
        <defs><radialGradient id="glow"><stop offset="0" stop-color="#f0002c"/><stop offset=".4" stop-color="#f4173f" stop-opacity=".8"/><stop offset="1" stop-color="#ff6f88" stop-opacity="0"/></radialGradient></defs>
        <circle cx="16" cy="16" r="14" fill="url(#glow)" stroke="none"/>
        <path d="M15.500 15v15l3.500-3 3 6.500 2.500-1.200-3-6.300H26z" fill="#fff" stroke="#333"/>`)}</div>`;
  }
}
